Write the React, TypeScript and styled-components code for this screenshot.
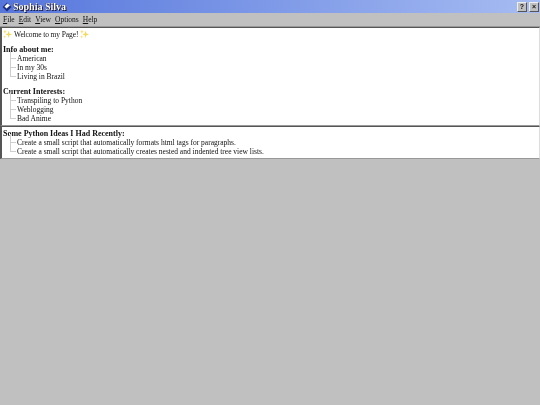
import styled, { createGlobalStyle } from 'styled-components';

const GlobalStyle = createGlobalStyle`
  html, body {
    background: #c0c0c0;
    margin: 0;
    padding: 0;
  }
`;

const Window = styled.div`
  background: #c0c0c0;
  color: #111;
  display: flex;
  filter: blur(0.25px);
  flex-direction: column;
  font-family: 'Liberation Serif', serif;
  height: 405px;
  width: 540px;
`;

const TitleBar = styled.div`
  align-items: center;
  background: linear-gradient(90deg, #5676dc 0%, #a6bcf2 100%);
  display: flex;
  height: 13px;
  justify-content: space-between;
  padding: 0 1px 0 2px;
`;

const TitleGroup = styled.div`
  align-items: center;
  display: flex;
  gap: 1px;
`;

const Title = styled.span`
  color: #fff;
  font-size: 10px;
  font-weight: 700;
  line-height: 13px;
  text-shadow: 1px 1px 0 #1a1a3a, -0.5px 0 0 #1a1a3a, 0 -0.5px 0 #1a1a3a;
`;

const TitleButtons = styled.div`
  display: flex;
  gap: 2px;
`;

const TitleButton = styled.span`
  align-items: center;
  background: #c0c0c0;
  border-bottom: 1px solid #555;
  border-left: 1px solid #eee;
  border-right: 1px solid #555;
  border-top: 1px solid #eee;
  box-sizing: border-box;
  color: #111;
  display: flex;
  font-family: 'Liberation Sans', sans-serif;
  font-size: 7px;
  font-weight: 700;
  height: 10px;
  justify-content: center;
  width: 10px;
`;

const MenuBar = styled.nav`
  align-items: center;
  border-bottom: 1px solid #999;
  display: flex;
  gap: 4px;
  height: 13px;
  padding-left: 3px;
`;

const MenuItem = styled.span`
  font-size: 7.5px;
  line-height: 13px;

  &::first-letter {
    text-decoration: underline;
  }
`;

const Panel = styled.section`
  background: #fff;
  border-left: 2px solid #555;
  border-right: 1px solid #ddd;
  border-top: 1px solid #555;
  border-bottom: 1px solid #999;
  box-sizing: border-box;
  display: flex;
  flex-direction: column;
  padding: 2px 0 2px 1px;
`;

const Line = styled.p<{ $gap?: number }>`
  font-size: 8px;
  font-weight: 700;
  height: 9px;
  line-height: 9px;
  margin: ${({ $gap }) => $gap ?? 0}px 0 0;
  white-space: nowrap;
`;

const Item = styled.div`
  align-items: center;
  display: flex;
  font-size: 7.5px;
  height: 9px;
  line-height: 9px;
  padding-left: 7px;
  white-space: nowrap;
`;

const Branch = styled.span`
  border-bottom: 1px solid #cfcfcf;
  border-left: 1px solid #cfcfcf;
  box-sizing: border-box;
  height: 9px;
  margin-right: 1px;
  margin-top: -8px;
  width: 6px;
`;

const Sparkle = () => (
  <svg width="9" height="10" viewBox="0 0 16 16">
    <path d="M10 2 L11.5 7 L16 8.5 L11.5 10 L10 15 L8.5 10 L4 8.5 L8.5 7 Z" fill="#f5d85a" />
    <path d="M3.5 0 L4.4 3 L7 4 L4.4 5 L3.5 8 L2.6 5 L0 4 L2.6 3 Z" fill="#f7dc6a" />
    <path d="M3 10 L3.7 12.3 L6 13 L3.7 13.7 L3 16 L2.3 13.7 L0 13 L2.3 12.3 Z" fill="#f7dc6a" />
  </svg>
);

const WelcomeLine = styled.div`
  align-items: center;
  display: flex;
  font-size: 7.5px;
  gap: 2px;
  height: 8px;
  letter-spacing: -0.1px;
`;

const AppIcon = () => (
  <svg width="10" height="10" viewBox="0 0 10 10">
    <path d="M5 0.5 L9.5 5 L5 9.5 L0.5 5 Z" fill="#1c2f80" />
    <path d="M5.5 1.5 L8 3.5 L4.5 6.5 L2.5 4.5 Z" fill="#fff" />
  </svg>
);

const interests = ['Transpiling to Python', 'Weblogging', 'Bad Anime'];
const about = ['American', 'In my 30s', 'Living in Brazil'];
const ideas = [
  'Create a small script that automatically formats html tags for paragraphs.',
  'Create a small script that automatically creates nested and indented tree view lists.',
];

const TreeList = ({ items }: { items: string[] }) => (
  <>
    {items.map((text) => (
      <Item key={text}>
        <Branch />
        {text}
      </Item>
    ))}
  </>
);

export default function App() {
  return (
    <Window>
      <GlobalStyle />
      <TitleBar>
        <TitleGroup>
          <AppIcon />
          <Title>Sophia Silva</Title>
        </TitleGroup>
        <TitleButtons>
          <TitleButton>?</TitleButton>
          <TitleButton>×</TitleButton>
        </TitleButtons>
      </TitleBar>
      <MenuBar>
        {['File', 'Edit', 'View', 'Options', 'Help'].map((label) => (
          <MenuItem key={label}>{label}</MenuItem>
        ))}
      </MenuBar>
      <Panel>
        <WelcomeLine>
          <Sparkle />
          Welcome to my Page!
          <Sparkle />
        </WelcomeLine>
        <Line $gap={7}>Info about me:</Line>
        <TreeList items={about} />
        <Line $gap={6}>Current Interests:</Line>
        <TreeList items={interests} />
      </Panel>
      <Panel>
        <Line>Some Python Ideas I Had Recently:</Line>
        <TreeList items={ideas} />
      </Panel>
    </Window>
  );
}
